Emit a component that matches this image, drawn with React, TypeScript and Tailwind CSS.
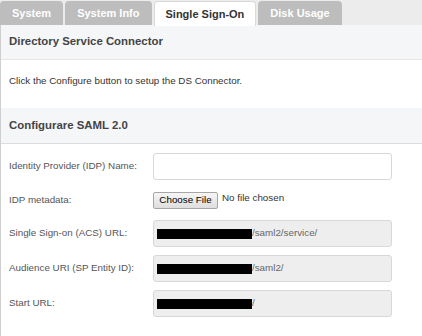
import React from "react";

const font = { fontFamily: '"Liberation Sans", Arial, sans-serif' };

function Tab({ label, active }: { label: string; active?: boolean }) {
  if (active) {
    return (
      <div className="h-[25px] px-[11px] flex items-center rounded-t-[4px] bg-white border border-b-0 border-[#d9d9d9] text-[11px] font-bold text-[#333] -mb-px relative z-10">
        {label}
      </div>
    );
  }
  return (
    <div className="h-[24px] px-[12px] flex items-center rounded-t-[4px] bg-[#bdbdbd] text-[11px] font-bold text-white">
      {label}
    </div>
  );
}

function Redacted() {
  return <span className="inline-block w-[95px] h-[10px] bg-black" />;
}

function ReadOnlyField({ suffix }: { suffix: string }) {
  return (
    <div className="w-[239px] h-[27px] rounded-[3px] border border-[#d8d8d8] bg-[#eeeeee] flex items-center pl-[3px] text-[9.8px] text-[#666]">
      <Redacted />
      <span>{suffix}</span>
    </div>
  );
}

function Row({ label, children, h = 27 }: { label: string; children: React.ReactNode; h?: number }) {
  return (
    <div className="flex items-center" style={{ height: h }}>
      <div className="w-[144px] text-[9.8px] text-[#555]">{label}</div>
      {children}
    </div>
  );
}

export default function App() {
  return (
    <div className="w-[422px] h-[336px] overflow-hidden bg-white" style={font}>
      <div className="h-[25px] bg-[#ececec] flex items-end gap-[2px] pl-0">
        <Tab label="System" />
        <Tab label="System Info" />
        <Tab label="Single Sign-On" active />
        <Tab label="Disk Usage" />
      </div>
      <div className="border-l border-[#cfcfcf] h-[311px]">
        <div className="h-[35px] bg-[#f5f6f8] border-b border-[#e6e6e6] flex items-center pl-[8px] text-[11.4px] font-bold text-[#444]">
          Directory Service Connector
        </div>
        <div className="h-[48px] pl-[8px] pt-[14px] text-[9.8px] text-[#333]">
          Click the Configure button to setup the DS Connector.
        </div>
        <div className="h-[36px] bg-[#f5f6f8] border-b border-[#dcdcdc] flex items-center pl-[8px] pt-[1px] text-[11.4px] font-bold text-[#444]">
          Configurare SAML 2.0
        </div>
        <div className="pl-[8px] pt-[9px] flex flex-col gap-[8px]">
          <Row label="Identity Provider (IDP) Name:">
            <div className="w-[239px] h-[27px] rounded-[3px] border border-[#d8d8d8] bg-white" />
          </Row>
          <Row label="IDP metadata:" h={24}>
            <div className="flex items-center gap-[4px] text-[9.8px] text-[#333]">
              <button className="h-[17px] w-[65px] border border-[#a6a6a6] rounded-[2px] bg-gradient-to-b from-[#f6f6f6] to-[#dedede] text-[9.8px] text-black leading-none">
                Choose File
              </button>
              <span className="-mt-[3px]">No file chosen</span>
            </div>
          </Row>
          <Row label="Single Sign-on (ACS) URL:">
            <ReadOnlyField suffix="/saml2/service/" />
          </Row>
          <Row label="Audience URI (SP Entity ID):">
            <ReadOnlyField suffix="/saml2/" />
          </Row>
          <Row label="Start URL:">
            <ReadOnlyField suffix="/" />
          </Row>
        </div>
      </div>
    </div>
  );
}
